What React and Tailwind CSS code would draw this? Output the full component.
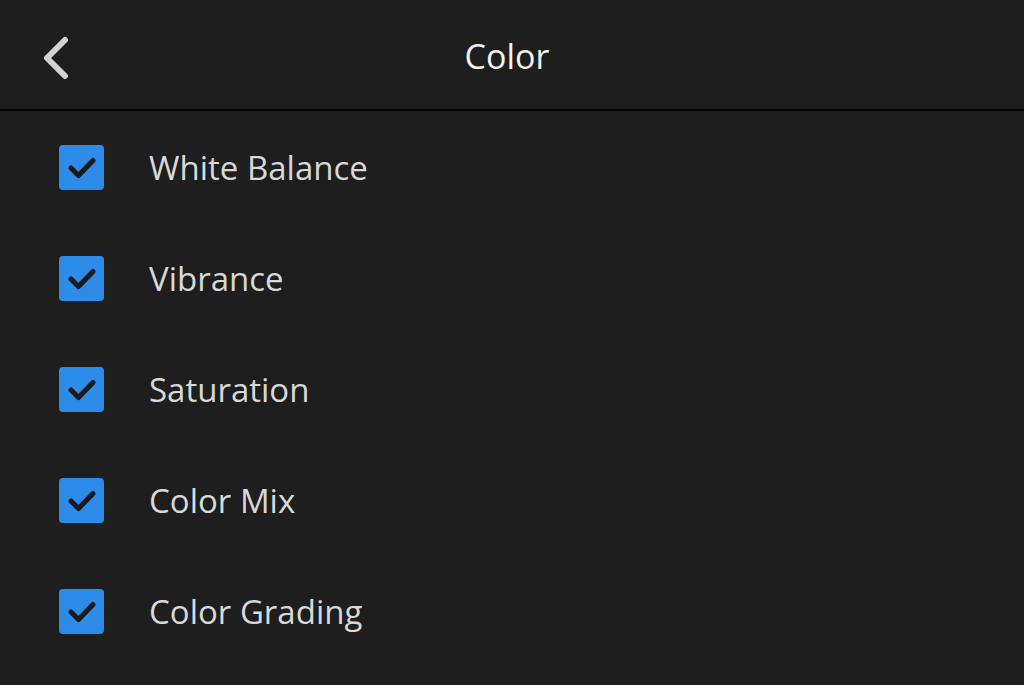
import React from "react";

const items = ["White Balance", "Vibrance", "Saturation", "Color Mix", "Color Grading"];

function Check() {
  return (
    <div className="w-[45px] h-[45px] rounded-[4px] bg-[#2d8bea] flex items-center justify-center shrink-0">
      <svg width="28" height="22" viewBox="0 0 28 22" fill="none">
        <path d="M3 11 L10.5 18.5 L25 3.5" stroke="#1a1a1a" strokeWidth="5" strokeLinecap="round" strokeLinejoin="round" />
      </svg>
    </div>
  );
}

export default function App() {
  return (
    <div className="w-[1024px] h-[685px] bg-[#1e1e1e] overflow-hidden" style={{ fontFamily: '"Open Sans", "Noto Sans", sans-serif' }}>
      <div className="h-[111px] flex items-center relative border-b-2 border-[#050505]">
        <div className="pl-[41px] pt-[6px] flex items-center">
          <svg width="30" height="44" viewBox="0 0 30 44" fill="none">
            <path d="M24 4 L6 22 L24 40" stroke="#d2d2d2" strokeWidth="6" strokeLinecap="round" strokeLinejoin="round" />
          </svg>
        </div>
        <div className="absolute left-0 right-0 top-0 h-full flex items-center justify-center pointer-events-none">
          <span className="text-[34px] text-[#f2f2f2] pr-[10px] pt-[4px]">Color</span>
        </div>
      </div>
      <div className="pt-[1px]">
        {items.map((t) => (
          <div key={t} className="h-[111px] flex items-center pl-[59px]">
            <Check />
            <span className="ml-[45px] text-[33px] text-[#d8d8d8]">{t}</span>
          </div>
        ))}
      </div>
    </div>
  );
}
